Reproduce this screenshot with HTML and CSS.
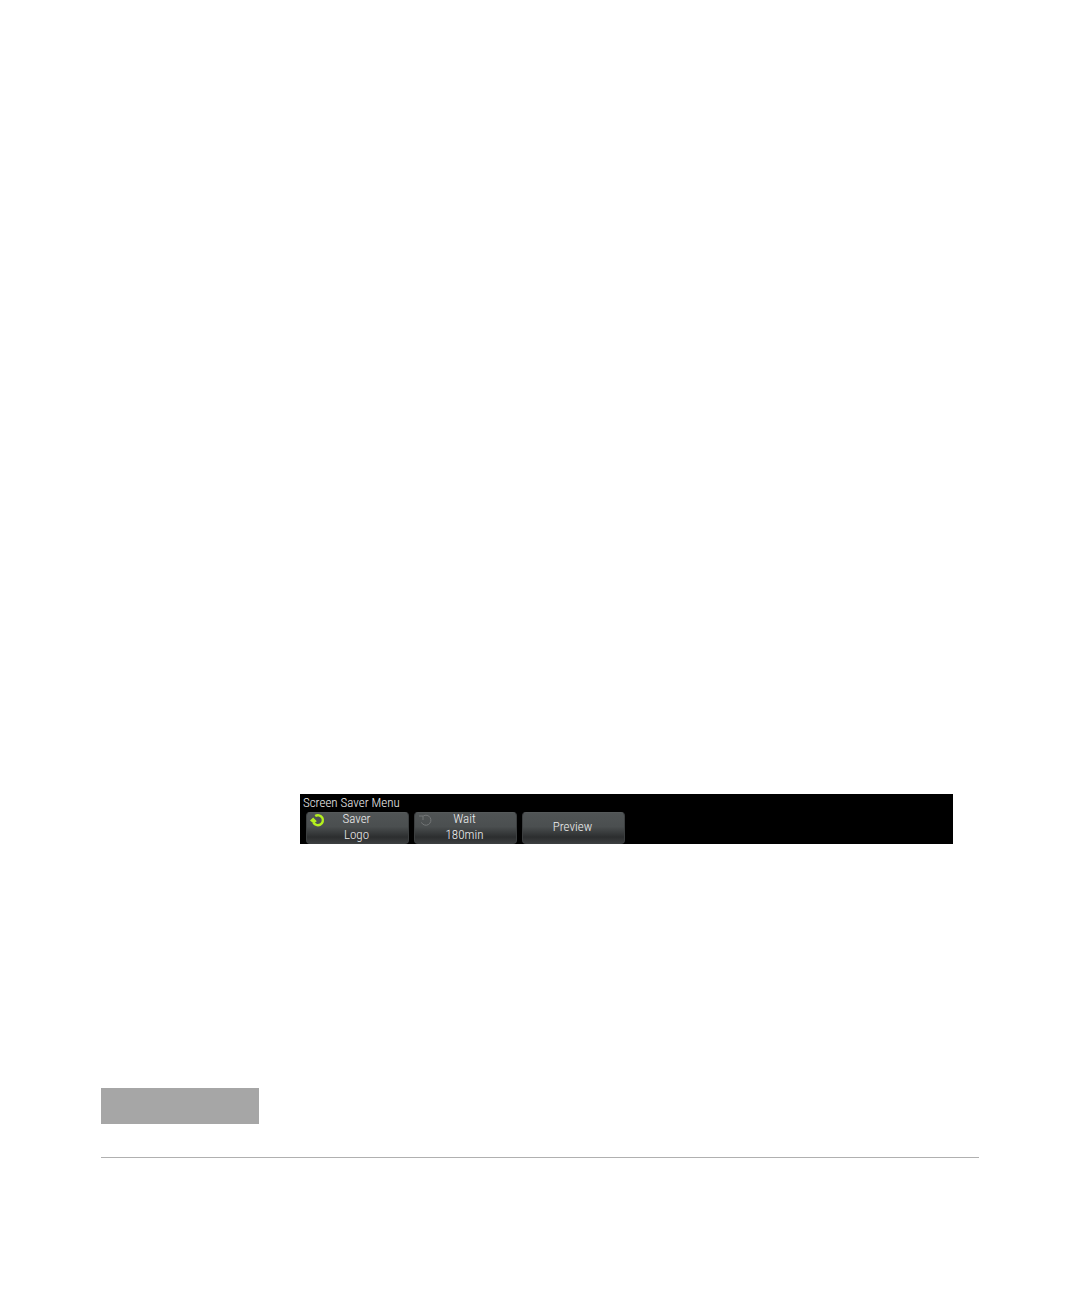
FILE: index.html
```
<!DOCTYPE html>
<html lang="en">
<head>
    <meta charset="UTF-8">
    <meta name="viewport" content="width=device-width, initial-scale=1.0">
    <title>Screen Saver Menu</title>
    <link rel="stylesheet" href="styles.css">
</head>
<body>
    <main class="page">
        <section class="menu">
            <h1 class="menu-title">Screen Saver Menu</h1>
            <div class="softkeys">
                <button class="softkey" type="button">
                    <svg class="knob active" viewBox="0 0 16 14" aria-hidden="true">
                        <path class="ring" d="M5.2 3A5 5 0 1 1 3.4 9.4"/>
                        <path class="tip" d="M0 7.4L3.2 4.6L6.8 8.2L4.4 10L2.4 9.4Z"/>
                    </svg>
                    <span>Saver</span>
                    <span>Logo</span>
                </button>
                <button class="softkey" type="button">
                    <svg class="knob" viewBox="0 0 16 14" aria-hidden="true">
                        <path class="ring" d="M5.2 3A5 5 0 1 1 3.4 9.4"/>
                        <path class="ring" d="M1 3H5V7"/>
                    </svg>
                    <span>Wait</span>
                    <span>180min</span>
                </button>
                <button class="softkey" type="button">
                    <span>Preview</span>
                </button>
            </div>
        </section>
        <div class="label-block"></div>
        <hr class="rule">
    </main>
</body>
</html>
```

FILE: styles.css
```
body {
    margin: 0;
    background-color: #fff;
    font-family: "Roboto Condensed", "Liberation Sans Narrow", "Liberation Sans", sans-serif;
}
.page {
    padding: 794px 101px 64px;
}
.menu {
    margin: 0 26px 0 199px;
    background-color: #000;
}
.menu-title {
    margin: 0;
    padding: 0 3px;
    font-size: 13px;
    font-weight: 300;
    line-height: 18px;
    color: #f0f0f0;
}
.softkeys {
    display: grid;
    grid-template-columns: repeat(6, 1fr);
    gap: 5px;
    padding: 0 4px 0 6px;
}
.softkey {
    position: relative;
    display: flex;
    flex-direction: column;
    align-items: center;
    justify-content: center;
    height: 32px;
    padding: 0 2px 2px 0;
    border: 1px solid #3c3f40;
    border-top-color: #55595a;
    border-radius: 4px;
    background: linear-gradient(#505455 0%, #4b4f50 45%, #2c2e2f 80%, #3a3d3e 100%);
    color: #f0f0f0;
    font-family: inherit;
    font-size: 13px;
    font-weight: 300;
    line-height: 16px;
    cursor: pointer;
}
.knob {
    position: absolute;
    top: 0;
    left: 3px;
    width: 16px;
    height: 14px;
}
.ring {
    fill: none;
    stroke: #737677;
    stroke-width: 1;
}
.active .ring {
    stroke: #b4f01e;
    stroke-width: 2.4;
}
.active .tip {
    fill: #b4f01e;
}
.label-block {
    width: 18%;
    height: 36px;
    margin-top: 244px;
    background-color: #a6a6a6;
}
.rule {
    height: 1px;
    margin: 33px 0 0;
    border: 0;
    background-color: #b0b0b0;
}
```
